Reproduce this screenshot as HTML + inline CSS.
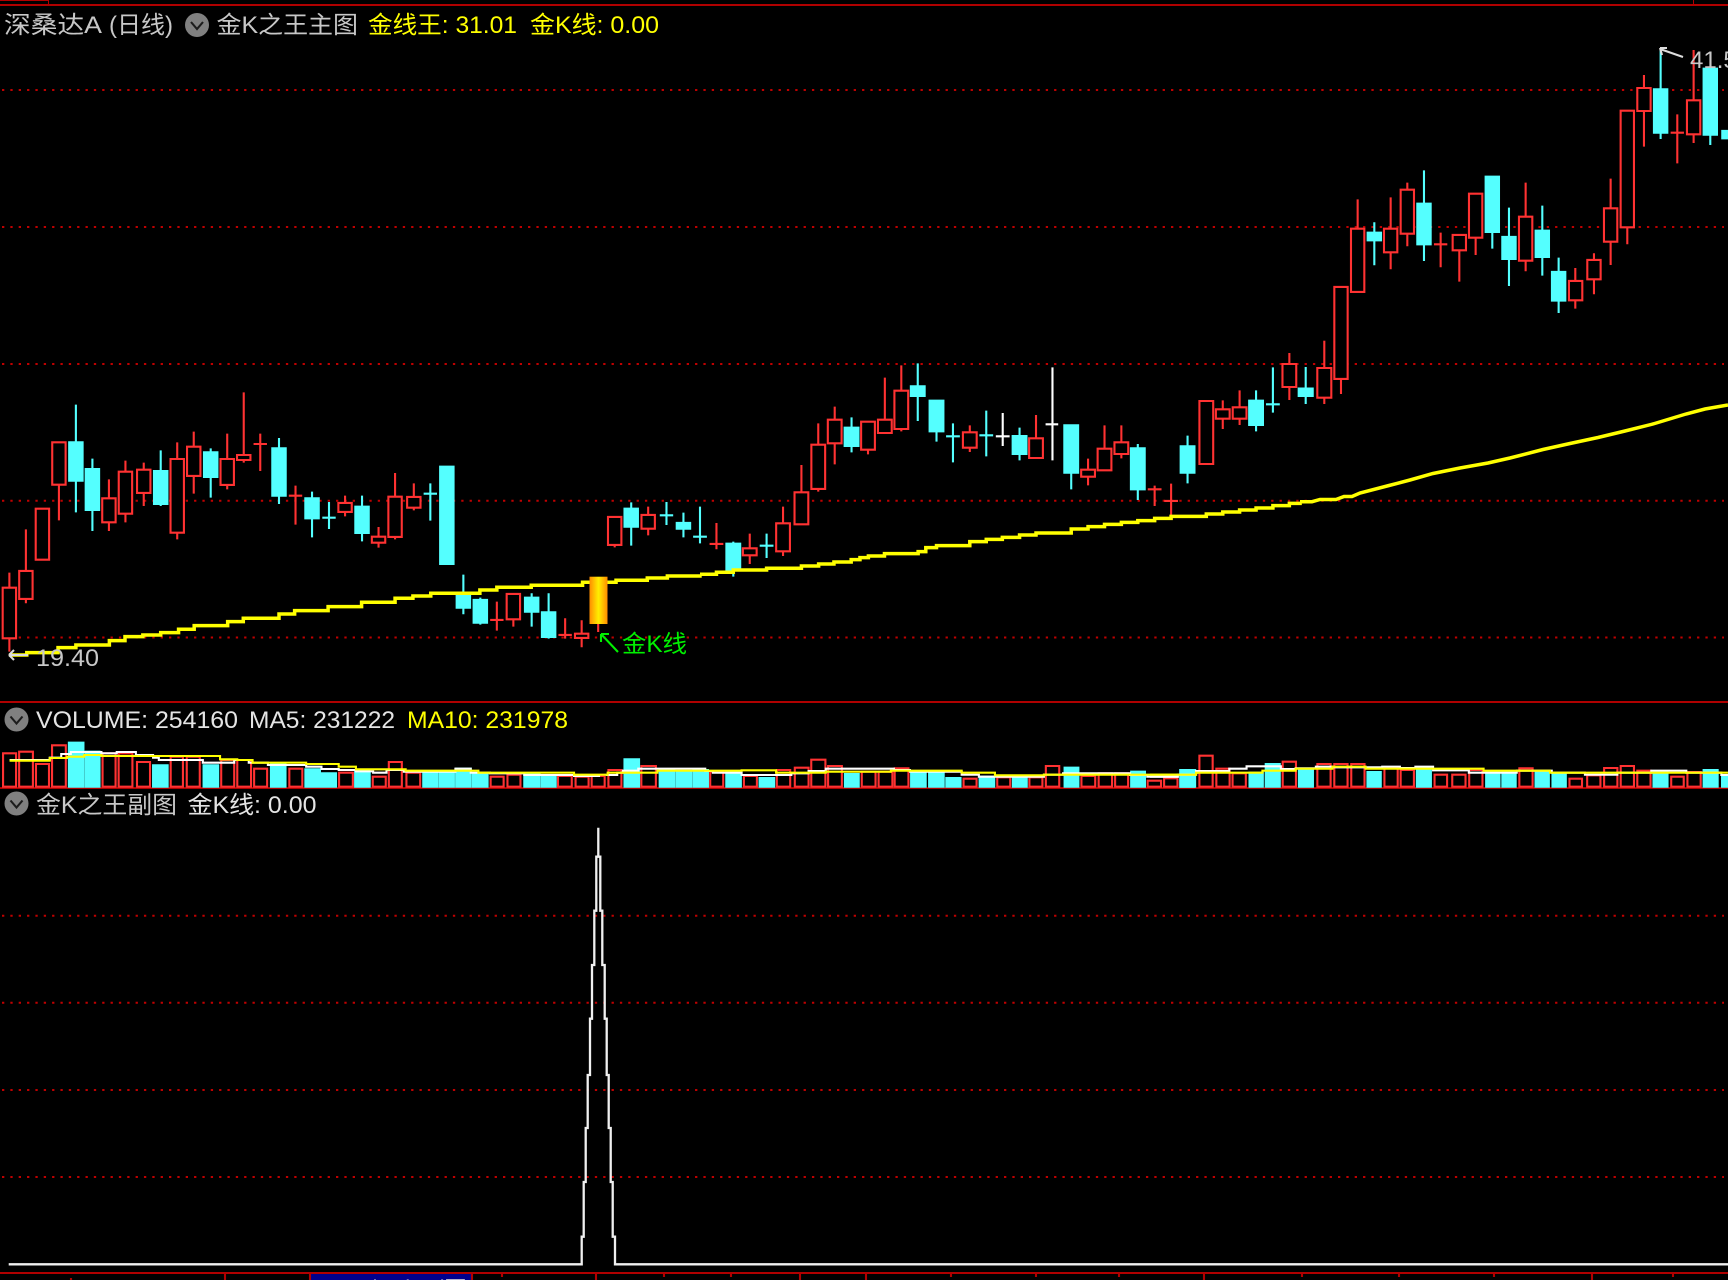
<!DOCTYPE html>
<html lang="zh">
<head>
<meta charset="utf-8">
<title>金K之王</title>
<style>
html,body{margin:0;padding:0;background:#000;width:1728px;height:1280px;overflow:hidden}
svg{display:block}
path{vector-effect:non-scaling-stroke;stroke-width:2.1;stroke-linejoin:miter}
.r{stroke:#ff3232;fill:none}
.rb{stroke:#ff3232;fill:#000}
.c{stroke:#54ffff;fill:#54ffff}
.w{stroke:#fff;fill:none}
.y{stroke:#ffff00;fill:none;stroke-width:3.5}
.vw{stroke:#fff;fill:none;stroke-width:2.1}
.vy{stroke:#ffff00;fill:none;stroke-width:2.1}
.d{stroke:#c00000;stroke-width:2;stroke-dasharray:2.3 6.05;fill:none}
text{font-family:"Liberation Sans","Noto Sans CJK SC",sans-serif;font-size:24px}
.g{fill:#c8c8c8}
.l{fill:#e4e4e4}
.ye{fill:#ffff00}
.gr{fill:#00f000}
</style>
</head>
<body>
<svg xmlns="http://www.w3.org/2000/svg" width="1728" height="1280" viewBox="0 0 1728 1280">
<defs>
<linearGradient id="gold" x1="0" x2="1" y1="0" y2="0">
<stop offset="0" stop-color="#ff8c00"/><stop offset=".5" stop-color="#ffee00"/><stop offset="1" stop-color="#ff8c00"/>
</linearGradient>
</defs>
<rect width="1728" height="1280" fill="#000"/>

<!-- frame lines -->
<rect x="0" y="4" width="1728" height="2" fill="#b00000"/>
<rect x="0" y="0" width="48" height="1" fill="#b00000"/>
<rect x="48" y="0" width="1" height="5" fill="#b00000"/>
<rect x="1693" y="0" width="1" height="5" fill="#b00000"/>
<rect x="0" y="701" width="1728" height="2" fill="#b00000"/>
<rect x="0" y="1272" width="1728" height="2" fill="#b00000"/>
<rect x="0" y="787" width="1728" height="2" fill="#b00000"/>

<!-- grid dots -->
<path class="d" style="stroke-width:2" d="M2 90H1724M2 227H1724M2 364H1724M2 500.7H1724M2 637.5H1724M2 915.7H1724M2 1002.7H1724M2 1090H1724M2 1177H1724"/>

<!-- candles left -->
<g transform="translate(0,350) scale(.4464,.3333)">
<path class="r" d="M21 668V905M58 538V760M132 277V511M244 388V543M281 332V517M322 338V468M397 277V568M434 245V431M509 251V418M546 127V338M583 251V363M568 282H598M662 407V524M647 437H677M773 437V499M848 531V593M885 369V568M927 400V481M1113 755V842M1098 810H1128M1150 732V830M1266 805V866M1251 855H1281M1303 811V892M1340 822V846M1377 501V592M1452 470V556"/>
<path class="rb" d="M6 713H36V865H6ZM43 663H73V747H43ZM80 476H110V629H80ZM117 277H147V404H117ZM229 445H259V517H229ZM266 365H296V491H266ZM307 359H337V429H307ZM382 327H412V548H382ZM419 290H449V378H419ZM494 327H524V405H494ZM531 315H561V330H531ZM758 459H788V486H758ZM833 560H863V578H833ZM870 440H900V561H870ZM912 441H942V473H912ZM1135 732H1165V808H1135ZM1288 851H1318V864H1288ZM1362 501H1392V585H1362ZM1437 495H1467V536H1437Z"/>
<path class="c" d="M170 164V487M155 277H185V392H155ZM207 326V543M192 357H222V480H192ZM360 301V468M345 363H375V462H345ZM472 295V443M457 307H487V381H457ZM625 264V462M610 295H640V437H610ZM699 425V562M684 445H714V505H684ZM737 456V537M722 503H752M811 437V574M796 470H826V549H796ZM964 400V512M949 431H979M986 350H1016V642H986ZM1038 674V793M1023 737H1053V773H1023ZM1076 743V824M1061 750H1091V818H1061ZM1191 730V830M1176 743H1206V785H1176ZM1229 730V866M1214 787H1244V861H1214ZM1414 457V587M1399 476H1429V530H1399ZM1493 456V525M1478 496H1508M1531 488V562M1516 519H1546V536H1516Z"/>
<path class="y" d="M20 915H60V908H130V893H170V885H245V872H280V860H320V855H360V848H400V838H435V827H510V815H545V805H625V792H660V782H735V770H810V757H885V745H925V738H965V730H1075V720H1113V712H1190V706H1305V697H1380V691H1450V684H1495V678H1568V674"/>
</g>

<!-- candles middle -->
<g transform="translate(700,340) scale(.3827,.3333)">
<path class="r" d="M43 549V628M25 612H61M130 581V672M217 500V648M265 375V553M309 250V455M352 200V373M439 245V343M483 113V279M526 76V274M705 256V336M878 225V354M1014 356V436M1057 256V391M1101 256V355M1188 437V498M1170 448H1206M1231 431V527M1213 483H1249M1366 181V267M1410 151V255M1540 39V180"/>
<path class="rb" d="M112 625H148V646H112ZM199 550H235V634H199ZM247 457H283V553H247ZM291 314H327V447H291ZM334 239H370V310H334ZM421 245H457V329H421ZM465 239H501V279H465ZM508 152H544V267H508ZM687 277H723V323H687ZM860 295H896V354H860ZM996 389H1032V410H996ZM1039 326H1075V391H1039ZM1083 307H1119V342H1083ZM1305 183H1341V372H1305ZM1348 208H1384V236H1348ZM1392 202H1428V236H1392ZM1522 72H1558V141H1522Z"/>
<path class="c" d="M0 500V610M-18 590H18M87 605V710M69 611H105V690H69ZM174 581V654M156 617H192M396 232V337M378 263H414V318H378ZM569 70V243M551 139H587V168H551ZM618 182V305M600 182H636V274H600ZM661 250V367M643 289H679M748 212V349M730 286H766M835 263V361M817 288H853V342H817ZM970 256V448M952 256H988V398H952ZM1144 312V480M1126 325H1162V448H1126ZM1274 287V430M1256 319H1292V398H1256ZM1453 151V274M1435 182H1471V255H1435ZM1497 82V218M1479 193H1515"/>
<path class="w" d="M791 219V318M773 289H809M921 82V361M903 253H936"/>
<path class="y" d="M0 703H43V697H87V690H174V685H265V678H310V672H350V666H395V659H418V653H440V648H482V641H570V635H590V623H618V617H705V605H748V598H790V592H835V585H878V579H970V567H1014V560H1057V553H1101V547H1144V542H1188V535H1231V529H1323V522H1366V516H1410V510H1453V504H1497V497H1540V490H1568V485"/>
</g>

<!-- candles bridging -->
<path class="c" d="M1305.7 367V404M1298.7 388.5H1312.7V396H1298.7Z"/>
<path class="r" d="M1324.3 340.7V404"/>
<path class="rb" d="M1317.3 368H1331.3V397.7H1317.3Z"/>

<!-- candles right -->
<g transform="translate(1250,0) scale(.3333)">
<path class="r" d="M273 1137V1182M323 598V876M422 592V808M472 548V739M572 698V802M552 733H592M628 705V845M677 581V765M827 548V814M976 804V926M1032 760V883M1082 536V795M1132 332V733M1182 225V440M1282 343V490M1262 398H1302M1331 150V429"/>
<path class="rb" d="M253 861H293V1137H253ZM303 686H343V876H303ZM402 686H442V757H402ZM452 569H492V701H452ZM608 705H648V751H608ZM657 581H697V713H657ZM807 650H847V782H807ZM957 843H997V901H957ZM1012 780H1052V838H1012ZM1062 625H1102V725H1062ZM1112 332H1152V682H1112ZM1162 264H1202V333H1162ZM1311 301H1351V403H1311Z"/>
<path class="c" d="M373 667V796M353 698H393V721H353ZM522 511V783M502 611H542V733H502ZM727 530V746M707 530H747V696H707ZM777 623V858M757 711H797V777H757ZM877 617V827M857 692H897V771H857ZM926 773V939M906 816H946V902H906ZM1232 150V417M1212 268H1252V398H1212ZM1381 206V435M1361 206H1401V404H1361ZM1417 393H1440V415H1417Z"/>
</g>
<path class="y" d="M1300 501.7H1312L1320 499.5H1336L1344 496.5H1352L1360 493L1389 485.5L1410 480L1433 473.5L1460 468L1488 463L1510 458L1543 449.5L1570 443.5L1598 437.5L1625 431L1653 424L1686 414L1705 409L1728 405"/>

<!-- gold candle -->
<rect x="589.5" y="576.7" width="18" height="47.3" fill="url(#gold)"/>

<!-- volume 1 -->
<g transform="translate(0,690) scale(.3827,.3333)">
<path class="rb" d="M8 190H42V290H8ZM50 185H86V290H50ZM94 222H128V290H94ZM136 166H172V290H136ZM268 190H302V290H268ZM310 190H346V290H310ZM358 216H392V290H358ZM446 200H478V290H446ZM488 200H522V290H488ZM578 210H612V290H578ZM620 210H656V290H620ZM664 236H698V290H664ZM756 236H790V290H756ZM886 248H922V290H886ZM974 260H1008V290H974ZM1016 216H1050V290H1016ZM1062 248H1098V290H1062ZM1282 260H1316V290H1282ZM1326 254H1360V290H1326ZM1458 258H1494V290H1458ZM1504 260H1538V290H1504ZM1546 258H1580V290H1546Z"/>
<path class="c" d="M180 158H218V290H180ZM224 185H260V290H224ZM400 226H438V290H400ZM532 226H570V290H532ZM708 222H746V290H708ZM798 238H836V290H798ZM840 250H878V290H840ZM928 240H966V290H928ZM1106 246H1142V290H1106ZM1148 246H1186V290H1148ZM1192 236H1230V290H1192ZM1236 252H1274V290H1236ZM1370 250H1410V290H1370ZM1416 256H1452V290H1416Z"/>
<path class="vw" d="M25 210H130V203H160V192H185V186H265V190H305V186H355V195H400V203H415V210H530V218H612V210H650V218H700V225H800V230H840V237H885V240H930V244H975V248H1010V240H1055V245H1190V236H1230V248H1280V250H1370V255H1500V258H1568"/>
<path class="vy" d="M25 212H130V204H175V200H220V195H265V198H575V208H620V210H660V218H800V222H885V230H930V238H1060V242H1250V248H1500V254H1568"/>
</g>

<!-- volume 2 -->
<g transform="translate(600,690) scale(.3827,.3333)">
<path class="rb" d="M22 240H56V290H22ZM108 228H146V290H108ZM288 245H322V290H288ZM376 258H410V290H376ZM462 240H497V290H462ZM509 233H545V290H509ZM552 209H589V290H552ZM596 228H632V290H596ZM684 245H720V290H684ZM728 245H764V290H728ZM770 235H806V290H770ZM950 266H984V290H950ZM1038 262H1072V290H1038ZM1122 262H1156V290H1122ZM1165 228H1200V290H1165ZM1258 258H1294V290H1258ZM1303 250H1338V290H1303ZM1346 250H1380V290H1346ZM1431 272H1466V290H1431ZM1474 265H1509V290H1474Z"/>
<path class="c" d="M64 208H102V290H64ZM156 238H194V290H156ZM200 246H238V290H200ZM244 240H282V290H244ZM330 248H368V290H330ZM417 264H455V290H417ZM640 252H676V290H640ZM813 245H851V290H813ZM860 248H898V290H860ZM905 264H942V290H905ZM992 260H1030V290H992ZM1079 262H1115V290H1079ZM1214 233H1250V290H1214ZM1388 245H1424V290H1388ZM1517 240H1555V290H1517Z"/>
<path class="vw" d="M15 255H45V248H60V242H100V236H275V243H295V248H370V255H500V250H545V243H590V236H768V240H810V245H945V254H990V260H1160V254H1210V250H1385V255H1430V260H1510V254H1555"/>
<path class="vy" d="M0 254H20V248H150V242H370V241H460V248H590V245H760V242H945V248H1032V256H1160V254H1420V254H1555V248H1568"/>
</g>

<!-- volume 3 -->
<g transform="translate(1150,690) scale(.3686,.3333)">
<path class="rb" d="M134 197H170V290H134ZM180 236H216V290H180ZM224 250H260V290H224ZM360 215H396V290H360ZM454 222H490V290H454ZM500 222H536V290H500ZM546 222H582V290H546ZM636 235H672V290H636ZM680 240H716V290H680ZM772 254H806V290H772ZM820 254H856V290H820ZM866 240H902V290H866ZM1002 235H1038V290H1002ZM1138 266H1172V290H1138ZM1186 256H1222V290H1186ZM1232 234H1268V290H1232ZM1277 228H1313V290H1277ZM1322 242H1358V290H1322ZM1414 260H1448V290H1414ZM1458 246H1494V290H1458Z"/>
<path class="c" d="M82 240H120V290H82ZM270 248H306V290H270ZM314 222H352V290H314ZM404 238H442V290H404ZM590 246H626V290H590ZM724 235H762V290H724ZM912 248H948V290H912ZM956 248H992V290H956ZM1046 244H1082V290H1046ZM1092 250H1128V290H1092ZM1366 248H1404V290H1366ZM1502 240H1540V290H1502ZM1552 255H1575V290H1552Z"/>
<path class="vw" d="M0 260H75V254H125V243H215V236H262V229H355V237H395V235H450V230H495V232H630V230H678V234H720V230H768V241H865V248H995V242H1090V248H1180V254H1268V248H1360V242H1455V248H1550V255H1568"/>
<path class="vy" d="M0 254H125V248H305V242H395V236H495V230H585V236H905V242H1085V248H1568"/>
</g>

<!-- sub chart line -->
<path d="M8.7 1264.3H581.7V1236.7H583.7V1182H585.7V1128H587.7V1075H590V1018.7H592V965H594.3V910.7H596.3V856.7H598.3V827.7V856.7H600.3V910.7H602.3V965H604.7V1018.7H606.7V1075H608.7V1128H610.7V1182H612.7V1236.7H615V1264.3H1728" fill="none" stroke="#f0f0f0" style="stroke-width:2.3"/>

<!-- bottom ticks -->
<rect x="310" y="1274" width="162" height="6" fill="#00008c"/>
<text x="314" y="1297" textLength="154" lengthAdjust="spacingAndGlyphs" fill="#e0e0e0">2020/11/06/五</text>
<path d="M71 1278V1280M225 1273V1280M310 1273V1280M472 1273V1280M502 1273V1277M596 1273V1280M664 1273V1277M731 1273V1277M800 1273V1280M866 1273V1280M951 1273V1277M1036 1273V1277M1119 1273V1277M1204 1273V1280M1302 1273V1277M1399 1273V1277M1494 1273V1277M1592 1273V1280M1673 1273V1277" stroke="#b00000" fill="none"/>

<!-- header text -->
<text class="g" x="4" y="33" textLength="98" lengthAdjust="spacingAndGlyphs">深桑达A</text>
<text class="g" x="109" y="33" textLength="64" lengthAdjust="spacingAndGlyphs">(日线)</text>
<circle cx="197" cy="25" r="12" fill="#808080"/>
<path d="M191 22L197 29L203 22" fill="none" stroke="#1c1c1c"/>
<text class="g" x="216.500" y="33" textLength="141.500" lengthAdjust="spacingAndGlyphs">金K之王主图</text>
<text class="ye" x="368" y="33" textLength="149" lengthAdjust="spacingAndGlyphs">金线王: 31.01</text>
<text class="ye" x="530" y="33" textLength="129" lengthAdjust="spacingAndGlyphs">金K线: 0.00</text>

<!-- volume header -->
<circle cx="16.5" cy="719.5" r="12" fill="#808080"/>
<path d="M10.5 716.5L16.5 723.5L22.5 716.5" fill="none" stroke="#1c1c1c"/>
<text class="l" x="36" y="728" textLength="202" lengthAdjust="spacingAndGlyphs">VOLUME: 254160</text>
<text class="l" x="249" y="728" textLength="146" lengthAdjust="spacingAndGlyphs">MA5: 231222</text>
<text class="ye" x="407" y="728" textLength="161" lengthAdjust="spacingAndGlyphs">MA10: 231978</text>

<!-- sub header -->
<circle cx="16.5" cy="803.5" r="12" fill="#808080"/>
<path d="M10.5 800.5L16.5 807.5L22.5 800.5" fill="none" stroke="#1c1c1c"/>
<text class="g" x="36" y="813" textLength="141" lengthAdjust="spacingAndGlyphs">金K之王副图</text>
<text class="l" x="187.500" y="813" textLength="129" lengthAdjust="spacingAndGlyphs">金K线: 0.00</text>

<!-- annotations -->
<path d="M618 652L601 634M601 634V642M601 634H609" fill="none" stroke="#00f000"/>
<text class="gr" x="622" y="652" textLength="65" lengthAdjust="spacingAndGlyphs">金K线</text>
<path d="M9 655L14 650M9 655L14 660M9 655H28" fill="none" stroke="#dcdcdc"/>
<text class="g" x="36" y="666" textLength="63" lengthAdjust="spacingAndGlyphs">19.40</text>
<path d="M1660 48H1667M1660 48L1662 55M1660 49L1683 57" fill="none" stroke="#dcdcdc"/>
<text class="g" x="1690" y="68">41.5</text>
</svg>
</body>
</html>
